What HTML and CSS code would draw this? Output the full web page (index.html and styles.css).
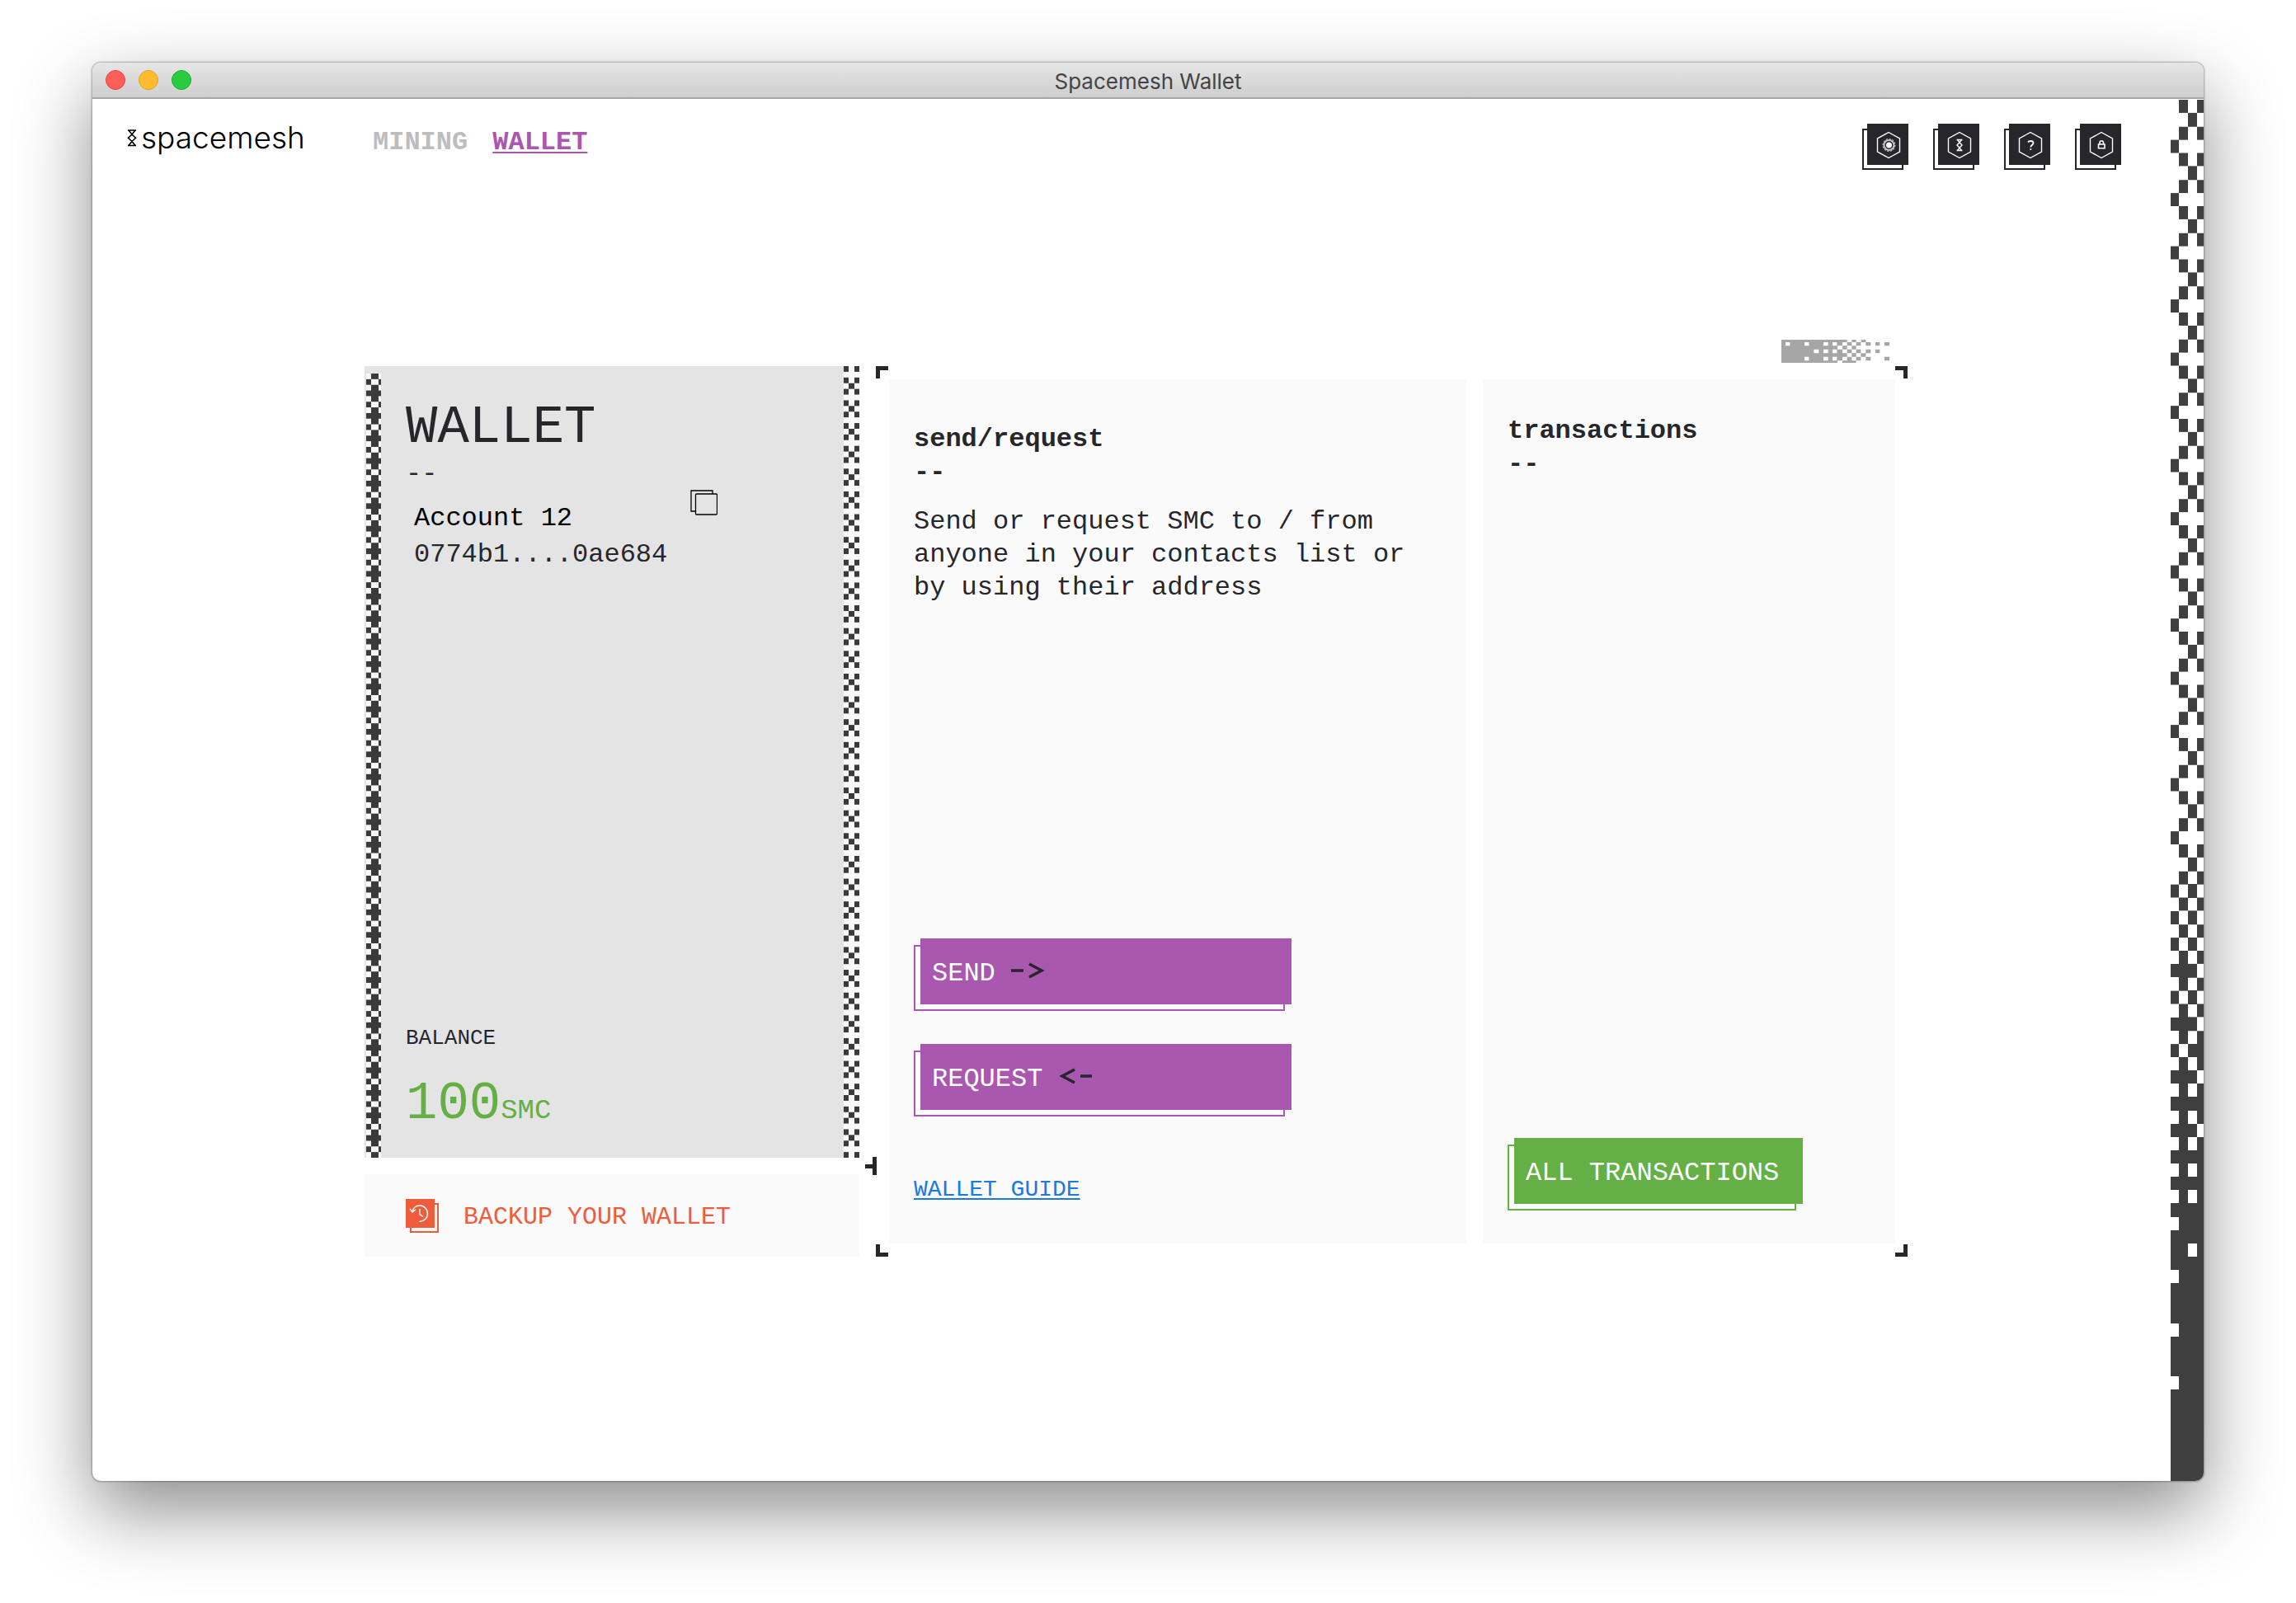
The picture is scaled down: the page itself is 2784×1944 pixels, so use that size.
FILE: index.html
```html
<!DOCTYPE html>
<html lang="en">
<head>
<meta charset="utf-8">
<title>Spacemesh Wallet</title>
<link rel="stylesheet" href="styles.css">
</head>
<body>
<div class="window">
  <div class="titlebar">
    <div class="lights"><i class="light red"></i><i class="light yellow"></i><i class="light green"></i></div>
    <span class="window-title">Spacemesh Wallet</span>
  </div>
  <div class="content">
    <div class="app">
      <header class="header">
        <div class="logo">
          <svg width="12" height="22" viewBox="0 0 12 22" fill="none" stroke="#000" stroke-width="1.600"><path d="M1 2h10M1 20.500h10M2 2l4 5 4-5M2 20.500l4-5 4 5M6 7l-4.500 4.300L6 15.500l4.500-4.200z"/></svg>
          <span>spacemesh</span>
        </div>
        <nav class="nav">
          <a href="#mining">MINING</a>
          <a href="#wallet" class="active">WALLET</a>
        </nav>
        <div class="tools">
          <button class="tool" aria-label="Settings"><svg viewBox="0 0 50 50" fill="none" stroke="#fff"><path class="hex" d="M26 10.500L39.500 18v16L26 41.500 12.500 34V18z"/><circle cx="26.500" cy="26" r="6" stroke="#c4c4c4" stroke-width="2"/><circle cx="26.500" cy="26" r="7.300" stroke="#b0b0b0" stroke-width="1.500" stroke-dasharray="2.300 1.500"/><circle cx="26.500" cy="26" r="3.500" fill="#fff" stroke="none"/></svg></button>
          <button class="tool" aria-label="Network"><svg viewBox="0 0 50 50" fill="none" stroke="#fff"><path class="hex" d="M26 10.500L39.500 18v16L26 41.500 12.500 34V18z"/><path stroke-width="1.400" d="M22.500 19.500h7M22.500 32.500h7M23.500 19.500l2.500 3.300 2.500-3.300M23.500 32.500l2.500-3.300 2.500 3.300M26 22.800L23 26l3 3.200 3-3.200z"/></svg></button>
          <button class="tool" aria-label="Help"><svg viewBox="0 0 50 50" fill="none" stroke="#fff"><path class="hex" d="M26 10.500L39.500 18v16L26 41.500 12.500 34V18z"/><path stroke-width="1.800" d="M23 22.500c.5-1 2-1.500 3.500-1.500s3 .8 3 2.500c0 2.200-3.200 2.300-3.200 5M26.300 30.200v1.900"/></svg></button>
          <button class="tool" aria-label="Lock"><svg viewBox="0 0 50 50" fill="none" stroke="#fff"><path class="hex" d="M26 10.500L39.500 18v16L26 41.500 12.500 34V18z"/><path stroke-width="1.600" d="M22.500 25h7.500v4.800h-7.500zM24 25v-2.500l1-1.500h2.500l1 1.500V25"/></svg></button>
        </div>
      </header>
      <main class="wallet">
        <div class="left">
          <section class="account">
            <svg class="edge edge-left" viewBox="0 0 18 139" preserveAspectRatio="none" shape-rendering="crispEdges">
              <defs><pattern id="dense" width="18" height="4" patternUnits="userSpaceOnUse"><path fill="#f9f9f9" d="M0 0h18v4H0z"/><path fill="#3a3a3a" d="M6 0h9v1H6zM0 1h6v1H0zM15 1h3v1h-3zM6 2h9v1H6zM0 3h18v1H0z"/></pattern></defs>
              <path fill="url(#dense)" d="M0 0h18v139H0z"/>
            </svg>
            <div class="account-body">
              <h1>WALLET</h1>
              <p class="dash">--</p>
              <div class="account-row">
                <div>
                  <p class="name">Account 12</p>
                  <p>0774b1....0ae684</p>
                </div>
                <button class="copy" aria-label="Copy address"><svg width="33" height="31" viewBox="0 0 33 31" fill="none" stroke="#000" stroke-width="1.300"><path d="M6 26H1V1h26v4"/><rect x="6.500" y="5" width="26" height="25" rx="1"/></svg></button>
              </div>
              <div class="balance">
                <p class="balance-label">BALANCE</p>
                <p class="amount">100<span>SMC</span></p>
              </div>
            </div>
            <svg class="edge edge-right" viewBox="0 0 19 139" preserveAspectRatio="none" shape-rendering="crispEdges">
              <defs><pattern id="cross" width="19" height="4" patternUnits="userSpaceOnUse"><path fill="#f9f9f9" d="M0 0h19v4H0z"/><path fill="#3a3a3a" d="M0 0h6v1H0zM13 0h6v1h-6zM0 2h6v1H0zM13 2h6v1h-6zM6 3h7v1H6z"/></pattern></defs>
              <path fill="url(#cross)" d="M0 0h19v139H0z"/>
            </svg>
          </section>
          <a class="backup" href="#backup">
            <svg width="40" height="41" viewBox="0 0 40 41" fill="none"><path stroke="#ee5c3c" stroke-width="2" d="M35 6h4v34H6v-5"/><path fill="#ee5c3c" d="M0 0h35v35H0z"/><path stroke="#fff" stroke-width="1.500" d="M8 15C9 11 12.500 8 17 8c5.500 0 9.500 4.500 9.500 9.700 0 5-3.500 9.300-10 9.800M5 12l3 4 4-3M17 12v6.500l4 3"/></svg>
            <span>BACKUP YOUR WALLET</span>
          </a>
          <svg class="tee" width="14" height="22" viewBox="0 0 14 22" fill="#26262b"><path d="M9 0h5v22H9v-8H0V9h9z"/></svg>
        </div>
        <div class="right">
          <i class="corner tl"></i><i class="corner tr"></i><i class="corner bl"></i><i class="corner br"></i>
          <svg class="fade" width="132" height="28" viewBox="60 35 396 84" preserveAspectRatio="none" fill="#a6a6a6"><path fill-rule="evenodd" d="M60 35h239v9H60zM316 35h16v9h-16zM350 35h17v9h-17z
M60 44h239v13H60zM75 44h16v13H75zM144 44h16v13h-16zM213 44h17v13h-17zM246 44h16v13h-16zM282 44h17v13h-17zM299 44h17v13h-17zM332 44h17v13h-17zM367 44h18v13h-18zM402 44h16v13h-16zM435 44h18v13h-18z
M60 57h204v13H60zM282 57h17v13h-17zM316 57h16v13h-16z
M60 70h222v14H60zM178 70h18v14h-18zM213 70h17v14h-17zM246 70h16v14h-16zM299 70h17v14h-17zM332 70h17v14h-17zM367 70h18v14h-18zM402 70h16v14h-16z
M60 84h239v13H60zM316 84h16v13h-16zM349 84h18v13h-18z
M60 97h222v14H60zM144 97h16v14h-16zM213 97h17v14h-17zM246 97h16v14h-16zM299 97h17v14h-17zM332 97h17v14h-17zM367 97h18v14h-18zM435 97h18v14h-18z
M60 111h204v8H60zM282 111h50v8h-50z"/></svg>
          <section class="panel send">
            <h2>send/request</h2>
            <p class="dash bold">--</p>
            <p class="text">Send or request SMC to / from anyone in your contacts list or by using their address</p>
            <div class="actions">
              <button class="btn purple">SEND<svg width="42" height="20" viewBox="0 0 42 20" fill="none" stroke="#26262b" stroke-width="3.500"><path d="M1 10h15M23 2l15 8-15 8"/></svg></button>
              <button class="btn purple">REQUEST<svg width="42" height="20" viewBox="0 0 42 20" fill="none" stroke="#26262b" stroke-width="3.500"><path d="M21 2L6 10l15 8M28 10h14"/></svg></button>
            </div>
            <a class="guide" href="#guide">WALLET GUIDE</a>
          </section>
          <section class="panel transactions">
            <h2>transactions</h2>
            <p class="dash bold">--</p>
            <button class="btn green-btn">ALL TRANSACTIONS</button>
          </section>
        </div>
      </main>
    </div>
    <svg class="strip" viewBox="0 0 40 104" preserveAspectRatio="none" shape-rendering="crispEdges" fill="#3f3f3f">
      <defs><pattern id="sparse" width="40" height="4" patternUnits="userSpaceOnUse"><path d="M10 0h11v1H10zM32 0h8v1h-8zM21 1h11v1H21zM10 2h11v1H10zM32 2h8v1h-8zM0 3h10v1H0z"/></pattern></defs>
      <path fill="url(#sparse)" d="M0 0h40v72H0z"/>
      <path d="M21 59h11v1H21zM0 61h10v1H0zM21 63h11v1H21zM10 64h11v3H10zM0 65h32v1H0zM21 67h11v1H21zM10 68h11v3H10zM0 69h32v1H0zM21 71h19v1H21z"/>
      <path d="M10 72h11v32H10zM0 73h32v1H0zM32 72h8v1h-8zM32 74h8v3h-8zM32 78h8v26h-8zM0 75h40v1H0zM0 77h32v1H0zM0 79h40v1H0zM0 81h40v1H0zM0 83h40v1H0zM21 84h11v2H21zM0 85h10v3H0zM21 87h11v17H21zM0 89h10v3H0zM0 93h10v3H0zM0 97h10v7H0z"/>
    </svg>
  </div>
</div>
</body>
</html>
```
FILE: styles.css
```css
* { box-sizing: border-box; }
body {
  margin: 0;
  min-height: 100vh;
  display: flex;
  padding: 76px 112px 148px;
  background: #fff;
  color: #26262b;
  font: 32px/40px "Liberation Mono", monospace;
}
h1, h2, p { margin: 0; font-weight: 400; }
button { padding: 0; border: 0; background: none; font: inherit; color: inherit; cursor: pointer; }
svg { display: block; flex: none; }

.window {
  flex: 1;
  display: flex;
  flex-direction: column;
  border-radius: 10px;
  overflow: hidden;
  background: #fff;
  box-shadow: 0 0 2px 1px rgba(0, 0, 0, .3), 0 36px 90px rgba(0, 0, 0, .45);
}
.titlebar {
  position: relative;
  display: flex;
  align-items: center;
  justify-content: center;
  height: 44px;
  border-bottom: 2px solid #a6a6a6;
  background: linear-gradient(#e6e6e6, #cecece);
}
.lights { position: absolute; left: 16px; display: flex; gap: 16px; }
.light { width: 24px; height: 24px; border-radius: 50%; border: 1px solid; }
.red { background: #ff5f58; border-color: #e2463f; }
.yellow { background: #ffbd2e; border-color: #e0a020; }
.green { background: #2aca41; border-color: #1bac2c; }
.window-title { padding-top: 4px; font: 26px/32px Inter, sans-serif; color: #444; }

.content { flex: 1; display: flex; }
.app { flex: 1; display: flex; flex-direction: column; padding-left: 12px; }
.strip { width: 40px; height: auto; margin: 1px 0 -2px; }

.header { display: flex; align-items: flex-start; padding: 25px 60px 0 30px; height: 86px; }
.logo { display: flex; align-items: center; gap: 5px; width: 298px; color: #000; font: 300 37px/44px Inter, sans-serif; }
.nav { flex: 1; display: flex; gap: 30px; padding-top: 8px; font-weight: 700; }
.nav a { color: #bdbdbd; text-decoration: none; }
.nav .active { color: #aa57b0; text-decoration: underline; text-decoration-thickness: 2px; text-underline-offset: 3px; }
.tools { display: flex; gap: 30px; padding-top: 5px; }
.tool { position: relative; padding: 0 0 6px 6px; isolation: isolate; }
.tool::before { content: ""; position: absolute; z-index: -1; inset: 6px 6px 0 0; border: 2px solid #26262b; }
.tool svg { width: 50px; height: 50px; background: #26262b; }
.hex { stroke-width: 1.4; }

.wallet {
  flex: 1;
  display: flex;
  gap: 20px;
  width: 100%;
  max-width: 1872px;
  margin: 238px auto 272px;
}
.left { position: relative; flex: 0 0 600px; display: flex; flex-direction: column; gap: 20px; }
.account { flex: 1; display: flex; padding-left: 2px; background: #e4e4e4; }
.edge { height: auto; }
.edge-left { width: 18px; margin-top: 9px; }
.edge-right { width: 19px; }
.account-body { flex: 1; display: flex; flex-direction: column; padding: 39px 30px 25px; }
h1 { font-size: 64px; line-height: 72px; }
.account-row { display: flex; align-items: flex-start; gap: 28px; margin-top: 12px; padding-left: 10px; line-height: 44px; }
.name { color: #000; }
.copy { margin-top: -13px; }
.balance { margin-top: auto; }
.balance-label { margin-bottom: 20px; font-size: 26px; }
.amount { font-size: 64px; line-height: 80px; color: #64b044; }
.amount span { font-size: 34px; line-height: 40px; }
.backup { display: flex; align-items: center; gap: 30px; height: 100px; padding-left: 50px; background: #fafafa; color: #ee5c3c; font-size: 30px; text-decoration: none; }
.backup span { padding-top: 4px; }
.tee { position: absolute; right: -21px; bottom: 99px; }

.right { position: relative; flex: 1; display: grid; grid-template-columns: 7fr 5fr; gap: 20px; padding: 16px; }
.corner { position: absolute; width: 15px; height: 15px; border: 0 solid #26262b; }
.tl { left: 0; top: 0; border-width: 5px 0 0 5px; }
.tr { right: 1px; top: 0; border-width: 5px 5px 0 0; }
.bl { left: 0; bottom: 0; border-width: 0 0 5px 5px; }
.br { right: 1px; bottom: 0; border-width: 0 5px 5px 0; }
.fade { position: absolute; right: 22px; top: -32px; }
.panel { display: flex; flex-direction: column; align-items: flex-start; background: #fafafa; }
.send { padding: 53px 30px 45px; }
.transactions { padding: 43px 30px 40px; }
h2 { font-size: 32px; line-height: 40px; font-weight: 700; }
.bold { font-weight: 700; }
.text { margin-top: 20px; }
.actions { display: flex; flex-direction: column; gap: 40px; margin: auto 0 69px; }
.btn {
  position: relative;
  isolation: isolate;
  display: flex;
  align-items: center;
  gap: 18px;
  height: 88px;
  padding: 0 14px 2px 22px;
  color: #fff;
}
.btn svg { margin-bottom: 8px; }
.btn::before, .btn::after { content: ""; position: absolute; }
.btn::before { z-index: -2; inset: 8px 8px 0 0; border: 2px solid; background: #fafafa; }
.btn::after { z-index: -1; inset: 0 0 8px 8px; }
.purple { width: 458px; }
.purple::before { border-color: #aa57b0; }
.purple::after { background: #aa57b0; }
.green-btn { width: 358px; margin-top: auto; }
.green-btn::before { border-color: #64b044; }
.green-btn::after { background: #64b044; }
.guide { color: #1b79e6; font-size: 28px; text-underline-offset: 3px; text-decoration-thickness: 2px; }
```
